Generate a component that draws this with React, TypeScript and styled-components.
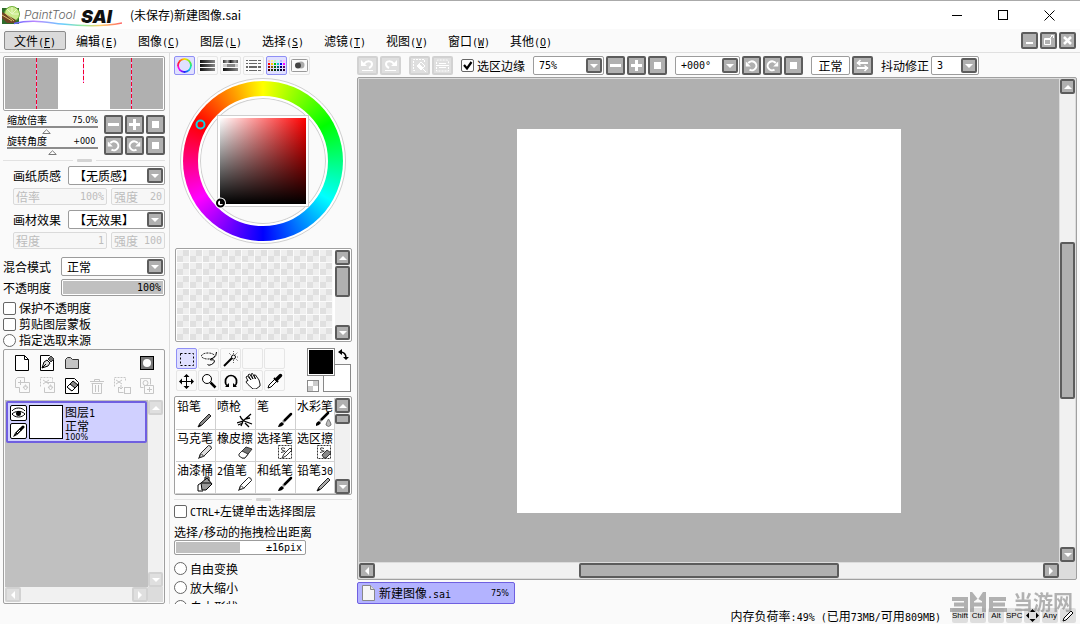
import React from "react";
import styled, { createGlobalStyle, css } from "styled-components";

const CJK = `"Noto Sans CJK SC", sans-serif`;
const MONO = `"DejaVu Sans Mono", "Noto Sans CJK SC", monospace`;

const Global = createGlobalStyle`
  * { box-sizing: border-box; }
  body { margin: 0; background: #fafafa; color: #000; font: 12px/16px ${CJK}; }
  button, input, select { margin: 0; padding: 0; font: inherit; color: inherit; }
  svg { display: block; flex: none; }
`;

const svgUrl = (body: string, w: number, h: number) =>
  `url("data:image/svg+xml,${encodeURIComponent(
    `<svg xmlns='http://www.w3.org/2000/svg' width='${w}' height='${h}' viewBox='0 0 ${w} ${h}'>${body}</svg>`
  )}")`;

const ARROW = svgUrl(
  `<rect x='1' y='1' width='14' height='13' rx='1' fill='#b0b0b0' stroke='#5c5c5c' stroke-width='2'/><path d='M4 6h8l-4 4z' fill='#fff'/>`, 16, 15);
const TICK = svgUrl(`<path d='M2 5l3 3.5L9.500 2' fill='none' stroke='#000' stroke-width='2.200'/>`, 11, 11);
const POINTER = svgUrl(`<path d='M4.500 .8L8.300 4.500H.7z' fill='#fff' stroke='#777'/>`, 9, 5);

/* ---------- text ---------- */

const Half = styled.span`font: 10px/1 ${MONO};`;

function Txt({ children }: { children: string }) {
  return (
    <>
      {children.split(/([\x20-\x7e±°]+)/).filter(Boolean).map((s, i) =>
        /^[\x20-\x7e±°]/.test(s) ? <Half key={i}>{s}</Half> : s)}
    </>
  );
}

/* ---------- shared controls ---------- */

const grayFace = css`
  border: 2px solid #5c5c5c;
  border-radius: 2px;
  background: #b0b0b0;
  color: #fff;
  &:disabled { border-color: #d2d2d2; background: #dfdfdf; }
`;

const GrayButton = styled.button<{ $w?: number; $h?: number }>`
  ${grayFace}
  display: flex;
  flex: none;
  align-items: center;
  justify-content: center;
  width: ${p => p.$w ?? 19}px;
  height: ${p => p.$h ?? 19}px;
`;

const Select = styled.select<{ $w: number; $mono?: boolean }>`
  appearance: none;
  flex: none;
  width: ${p => p.$w}px;
  height: 19px;
  padding: 0 18px 0 5px;
  border: 1px solid #9c9c9c;
  border-radius: 2px;
  background: #fff ${ARROW} right 1px center no-repeat;
  font: ${p => (p.$mono ? `10px/17px ${MONO}` : `12px/17px ${CJK}`)};
`;

const Check = styled.input`
  appearance: none;
  flex: none;
  width: 13px;
  height: 13px;
  border: 1px solid #666;
  border-radius: ${p => (p.type === "radio" ? 7 : 2)}px;
  background: #fff;
  &:checked { background: #fff ${TICK} center no-repeat; }
`;

const CheckLabel = styled.label<{ $h?: number }>`
  display: flex;
  flex: none;
  align-items: center;
  gap: 3px;
  height: ${p => p.$h ?? 16}px;
  white-space: nowrap;
`;

const Gauge = styled.input<{ $w: number; $h: number; $fill: number }>`
  flex: none;
  width: ${p => p.$w}px;
  height: ${p => p.$h}px;
  padding: 1px 3px;
  border: 1px solid #9c9c9c;
  border-radius: 2px;
  background: linear-gradient(90deg, #c0c0c0 ${p => p.$fill}%, #fff 0);
  box-shadow: inset 0 0 0 1px #fff;
  font: 10px/13px ${MONO};
  text-align: right;
`;

const Divider = styled.div<{ $h: number }>`
  display: flex;
  flex: none;
  align-items: center;
  gap: 4px;
  height: ${p => p.$h}px;
  &::before, &::after { content: ""; flex: 1; height: 1px; background: #e2e2e2; }
`;
const Grip = styled.span`width: 15px; height: 3px; border-radius: 1px; background: #d4d4d4;`;

const Bar = styled.div<{ $dir: "row" | "column" }>`
  display: flex;
  flex-direction: ${p => p.$dir};
  justify-content: space-between;
  min-width: 0;
  min-height: 0;
  background: #f1f1f1;
`;
const Track = styled.div<{ $dir: "row" | "column"; $center?: boolean }>`
  display: flex;
  flex: 1;
  flex-direction: ${p => p.$dir};
  justify-content: ${p => (p.$center ? "center" : "flex-start")};
  padding: ${p => (p.$dir === "row" ? "0 1px" : "1px 0")};
`;
const Thumb = styled.div<{ $size: string }>`
  ${grayFace}
  flex: 0 0 ${p => p.$size};
`;

function ScrollBar({ dir, thumb, center, disabled }: {
  dir: "row" | "column"; thumb?: string; center?: boolean; disabled?: boolean;
}) {
  const v = dir === "column";
  return (
    <Bar $dir={dir}>
      <GrayButton $w={v ? 15 : 16} $h={15} disabled={disabled} aria-label={v ? "上" : "左"}>
        <svg width="8" height="8"><path d={v ? "M0 6h8L4 2z" : "M6 0v8L2 4z"} fill="#fff" /></svg>
      </GrayButton>
      <Track $dir={dir} $center={center}>{thumb && <Thumb $size={thumb} />}</Track>
      <GrayButton $w={v ? 15 : 16} $h={15} disabled={disabled} aria-label={v ? "下" : "右"}>
        <svg width="8" height="8"><path d={v ? "M0 2h8L4 6z" : "M2 0v8l4-4z"} fill="#fff" /></svg>
      </GrayButton>
    </Bar>
  );
}

/* ---------- icons ---------- */

const Minus = () => <svg width="13" height="13"><rect x="1" y="5" width="11" height="3" fill="#fff" /></svg>;
const Plus = () => <svg width="13" height="13"><path d="M1 5h4V1h3v4h4v3H8v4H5V8H1z" fill="#fff" /></svg>;
const Stop = () => <svg width="13" height="13"><rect x="3" y="3" width="7" height="7" fill="#fff" /></svg>;
const Rotate = ({ cw }: { cw?: boolean }) => (
  <svg width="13" height="13" viewBox="0 0 13 13">
    <g transform={cw ? "translate(13 0) scale(-1 1)" : undefined}>
      <path d="M3.200 4.200A4.500 4.500 0 1 1 4.500 10.700" fill="none" stroke="#fff" strokeWidth="2" />
      <path d="M.8 2.500v5h5z" fill="#fff" />
    </g>
  </svg>
);
const Undo = ({ flip }: { flip?: boolean }) => (
  <svg width="15" height="15" viewBox="0 0 15 15">
    <g transform={flip ? "translate(15 0) scale(-1 1)" : undefined}>
      <path d="M4 6c3-4 8-3 8 0 0 2-1 3-3 4" fill="none" stroke="#fff" strokeWidth="2" />
      <path d="M1 2v6h6zM2 12h11v1H2z" fill="#fff" />
    </g>
  </svg>
);
const ClearSel = () => (
  <svg width="15" height="15" fill="none" stroke="#fff">
    <path d="M12.500 4V1.500h-11v11H4" strokeDasharray="2 1" />
    <path d="M5 8l4-4 4 4-4 4z" fill="#dfdfdf" /><path d="M5 8l2-2 4 4-2 2zM10 10l4 4" fill="#fff" />
  </svg>
);
const InvertSel = () => (
  <svg width="15" height="15" fill="none" stroke="#fff">
    <path d="M1.500 6v-2q0-2 2-2h8q2 0 2 2v2M1.500 9v4h12V9" strokeDasharray="2 1" />
    <path d="M1 7.500h13M4 5.500h7M4 9.500h7" />
  </svg>
);
const Swap = () => (
  <svg width="15" height="13" fill="none" stroke="#fff" strokeWidth="2">
    <path d="M2 4h11M2 9h11" /><path d="M5.500 1l-3 3 3 2.500M9.500 6.500l3 2.500-3 3" strokeWidth="1.500" />
  </svg>
);

/* ---------- title bar ---------- */

const TitleBar = styled.header`
  display: flex;
  flex: none;
  align-items: center;
  height: 29px;
  padding: 0 8px 0 2px;
  border-top: 1px solid #aaa;
  background: #fff;
`;
const Title = styled.h1`flex: 1; margin: 0 0 0 8px; font: 12px/16px ${CJK};`;
const WinButton = styled.button`
  display: grid;
  place-items: center;
  width: 46px;
  height: 28px;
  border: 0;
  background: none;
`;

const Logo = () => (
  <svg width="120" height="24" viewBox="0 0 120 24">
    <defs>
      <linearGradient id="rb"><stop offset="0" stopColor="#66f" /><stop offset=".2" stopColor="#b8f" />
        <stop offset=".45" stopColor="#6cf" /><stop offset=".65" stopColor="#9e9" /><stop offset=".8" stopColor="#fc6" />
        <stop offset="1" stopColor="#f66" /></linearGradient>
    </defs>
    <rect x="0" y="5" width="17" height="16" fill="#2f6b2c" />
    <circle cx="10" cy="11" r="7.500" fill="#c9ea8c" stroke="#6fb03a" />
    <path d="M10 11L5 6M10 11l5-5M10 11V4M10 11h7" stroke="#eaf8c8" />
    <path d="M0 9l14 8-1 3H5l-5-5z" fill="#6e4424" /><path d="M0 12l10 6M3 10l9 8" stroke="#dcc06a" />
    <path d="M12 20.500C30 16 42 19 60 21s40 3 60-1" fill="none" stroke="url(#rb)" strokeWidth="1.500" />
    <text x="22" y="16" fontFamily="Inter, sans-serif" fontWeight="300" fontStyle="italic" fontSize="12" fill="#666">PaintTool</text>
    <text x="79" y="20" fontFamily="Inter, sans-serif" fontWeight="900" fontStyle="italic" fontSize="18" fill="#111">SAI</text>
  </svg>
);

/* ---------- menu ---------- */

const MenuBar = styled.nav`
  display: flex;
  flex: none;
  align-items: flex-start;
  height: 24px;
  padding: 2px 4px 0;
  border-bottom: 1px solid #e0e0e0;
`;
const MenuItem = styled.button<{ $on?: boolean }>`
  width: 62px;
  height: 19px;
  border: 1px solid ${p => (p.$on ? "#8c8c8c" : "transparent")};
  border-radius: 2px;
  background: ${p => (p.$on ? "#dadada" : "none")};
  line-height: 16px;
  white-space: nowrap;
`;
const MdiButtons = styled.div`display: flex; gap: 2px; margin: 1px 0 0 auto;`;

const MENU: [string, string][] = [
  ["文件", "F"], ["编辑", "E"], ["图像", "C"], ["图层", "L"], ["选择", "S"],
  ["滤镜", "T"], ["视图", "V"], ["窗口", "W"], ["其他", "O"],
];

/* ---------- page frame ---------- */

const Page = styled.div`display: flex; flex-direction: column; height: 100vh; overflow: hidden;`;
const Body = styled.main`
  display: grid;
  grid-template-columns: 170px 187px minmax(0, 1fr);
  grid-template-rows: minmax(0, 1fr);
  flex: 1;
  min-height: 0;
`;
const Column = styled.section<{ $pad: string; $line?: boolean }>`
  display: flex;
  flex-direction: column;
  min-width: 0;
  overflow: hidden;
  padding: ${p => p.$pad};
  border-right: ${p => (p.$line ? "1px solid #dcdcdc" : "0")};
`;
const Row = styled.div<{ $top?: number; $left?: number; $gap?: number }>`
  display: flex;
  flex: none;
  align-items: center;
  justify-content: space-between;
  gap: ${p => p.$gap ?? 0}px;
  margin-top: ${p => p.$top ?? 0}px;
  padding-left: ${p => p.$left ?? 0}px;
  white-space: nowrap;
`;
const Frame = styled.div`
  border: 1px solid #a0a0a0;
  border-radius: 2px;
  background: #fff;
  padding: 1px;
`;

/* ---------- left column ---------- */

const Navigator = styled(Frame)`height: 55px; flex: none;`;
const ZoomGrid = styled.div`display: grid; gap: 2px; flex: none; margin-top: 4px; padding-left: 4px;`;
const ZoomRow = styled.div`display: flex; gap: 2px;`;
const ZoomValue = styled.label`
  display: grid;
  grid-template-columns: 1fr auto;
  grid-template-rows: 11px 8px;
  width: 91px;
  margin-right: 4px;
  font-size: 10px;
  line-height: 10px;
`;
const Tiny = styled.span`font: 9px/10px "DejaVu Sans Condensed", "DejaVu Sans", sans-serif;`;
const Slider = styled.input`
  appearance: none;
  grid-column: 1 / -1;
  width: 100%;
  height: 8px;
  background: none;
  &::-webkit-slider-runnable-track { height: 8px; border-top: 2px solid #8c8c8c; }
  &::-webkit-slider-thumb { appearance: none; width: 9px; height: 5px; margin-top: 1px; background: ${POINTER}; }
`;
const MiniField = styled.label<{ $w: number }>`
  display: flex;
  align-items: center;
  width: ${p => p.$w}px;
  height: 17px;
  padding: 0 2px;
  border: 1px solid #dadada;
  border-radius: 2px;
  background: #f7f7f7;
  color: #bcbcbc;
  input { flex: 1; min-width: 0; border: 0; background: none; text-align: right; font: 10px/14px ${MONO}; color: #bcbcbc; }
`;
const LayerPanel = styled(Frame)`
  display: flex;
  flex: 1;
  flex-direction: column;
  min-height: 0;
  margin-top: 1px;
  background: #fafafa;
`;
const IconRow = styled.div`display: flex; flex: none; padding: 0 4px;`;
const LayerTool = styled.button<{ $end?: boolean }>`
  display: grid;
  place-items: center;
  width: 25px;
  height: 23px;
  margin-left: ${p => (p.$end ? "auto" : "0")};
  border: 0;
  background: none;
  color: #000;
  &:disabled { color: #c6c6c6; }
`;
const LayerArea = styled.div`
  display: grid;
  flex: 1;
  grid-template-columns: minmax(0, 1fr) 15px;
  grid-template-rows: minmax(0, 1fr) 15px;
  margin-top: 3px;
  background: #dcdcdc;
`;
const LayerList = styled.div`padding: 1px; background: #c0c0c0;`;
const Layer = styled.div`
  display: flex;
  gap: 2px;
  height: 42px;
  padding: 2px;
  border: 2px solid #6f5fe0;
  border-radius: 2px;
  background: #d0d0ff;
`;
const LayerToggles = styled.div`display: grid; gap: 2px;`;
const Toggle = styled.button`
  display: grid;
  place-items: center;
  width: 17px;
  height: 16px;
  border: 1px solid #000;
  border-radius: 2px;
  background: #fff;
`;
const Thumbnail = styled.div`width: 34px; height: 34px; border: 1px solid #000; background: #fff;`;
const LayerText = styled.div`display: grid; align-content: start; line-height: 13px;`;

const page = <path d="M1.500 .5h9l4 4v11h-13z" fill="#fff" stroke="currentColor" />;
const boxDown = (
  <path d="M7.500 5.500h8v10h-10v-5M9 10h2V8h1v2h2l-2.500 3z" fill="none" stroke="currentColor" />
);

function EyeIcon() {
  return (
    <svg width="15" height="12" viewBox="0 0 15 12">
      <path d="M1 4c3-4 10-4 13 0M1 7c3-3 9-4 13 0-3 4-10 4-13 0z" fill="none" stroke="#000" />
      <circle cx="7.500" cy="6.500" r="2.500" />
    </svg>
  );
}

function LeftColumn() {
  return (
    <Column $pad="3px 4px 0 3px" $line>
      <Navigator>
        <svg width="100%" height="51" viewBox="0 0 158 51" shapeRendering="crispEdges">
          <path d="M0 0h53v51H0zM105 0h53v51h-53z" fill="#b0b0b0" />
          <path d="M31.500 0v51M78.500 0v25M126.500 0v51" stroke="#ff9cf0" />
          <path d="M31.500 0v51M78.500 0v25M126.500 0v51" stroke="#f00030" strokeDasharray="4 2" />
        </svg>
      </Navigator>
      <ZoomGrid>
        <ZoomRow>
          <ZoomValue>缩放倍率<Tiny>75.0%</Tiny><Slider type="range" defaultValue={43} /></ZoomValue>
          <GrayButton aria-label="缩小"><Minus /></GrayButton>
          <GrayButton aria-label="放大"><Plus /></GrayButton>
          <GrayButton aria-label="重置"><Stop /></GrayButton>
        </ZoomRow>
        <ZoomRow>
          <ZoomValue>旋转角度<Tiny>+000&nbsp;</Tiny><Slider type="range" defaultValue={50} /></ZoomValue>
          <GrayButton aria-label="左转"><Rotate /></GrayButton>
          <GrayButton aria-label="右转"><Rotate cw /></GrayButton>
          <GrayButton aria-label="重置"><Stop /></GrayButton>
        </ZoomRow>
      </ZoomGrid>
      <Divider $h={11}><Grip /></Divider>

      <Row $left={10}>
        <label htmlFor="paper">画纸质感</label>
        <Select id="paper" $w={97}><option>【无质感】</option></Select>
      </Row>
      <Row $top={3} $left={10}>
        <MiniField $w={94}>倍率<input disabled value="100%" /></MiniField>
        <MiniField $w={54}>强度<input disabled value="20" /></MiniField>
      </Row>
      <Row $top={5} $left={10}>
        <label htmlFor="effect">画材效果</label>
        <Select id="effect" $w={97}><option>【无效果】</option></Select>
      </Row>
      <Row $top={3} $left={10}>
        <MiniField $w={94}>程度<input disabled value="1" /></MiniField>
        <MiniField $w={54}>强度<input disabled value="100" /></MiniField>
      </Row>
      <Row $top={8}>
        <label htmlFor="mode">混合模式</label>
        <Select id="mode" $w={104}><option>正常</option></Select>
      </Row>
      <Row $top={3}>
        <label htmlFor="opacity">不透明度</label>
        <Gauge id="opacity" $w={104} $h={17} $fill={100} readOnly value="100%" />
      </Row>
      <Row $top={4} />
      <CheckLabel><Check type="checkbox" />保护不透明度</CheckLabel>
      <CheckLabel><Check type="checkbox" />剪贴图层蒙板</CheckLabel>
      <CheckLabel><Check type="radio" />指定选取来源</CheckLabel>

      <LayerPanel>
        <IconRow>
          <LayerTool aria-label="新建图层"><svg width="16" height="16">{page}<path d="M10.500 .5v4h4" fill="none" stroke="#000" /></svg></LayerTool>
          <LayerTool aria-label="新建钢笔图层">
            <svg width="16" height="16">{page}<path d="M3 13l2-6 3-2 3 3-2 3zM3 13l4-4" fill="#ddd" stroke="#000" /><path d="M9 4l3-3 3 3-3 3z" fill="#777" stroke="#333" /></svg>
          </LayerTool>
          <LayerTool aria-label="新建图层组"><svg width="16" height="16"><path d="M1.500 13.500v-9l2-2h3l2 2h6v9z" fill="#c4c4c4" stroke="#333" /></svg></LayerTool>
          <LayerTool aria-label="图层蒙板" $end>
            <svg width="16" height="16"><rect x="1.500" y="1.500" width="13" height="13" fill="#777" stroke="#000" /><circle cx="8" cy="8" r="4" fill="#fff" /></svg>
          </LayerTool>
        </IconRow>
        <IconRow>
          <LayerTool disabled aria-label="向下转写"><svg width="16" height="17" fill="none" stroke="currentColor"><path d="M5.500 10.500h-4v-8l2-2h7v5M4 5.500h5M6.500 3v5" />{boxDown}</svg></LayerTool>
          <LayerTool disabled aria-label="向下合并"><svg width="16" height="17" fill="none" stroke="currentColor"><path d="M1.500 9.500v-9h12v4" strokeDasharray="2 1" /><path d="M4 3l6 4M4 7l6-4" />{boxDown}</svg></LayerTool>
          <LayerTool aria-label="清除图层">
            <svg width="16" height="16">{page}<path d="M3 9l6-6 5 4-6 6z" fill="#888" stroke="#000" /><path d="M3 9l3-3 5 4-3 3z" fill="#fff" stroke="#000" /></svg>
          </LayerTool>
          <LayerTool disabled aria-label="删除图层">
            <svg width="16" height="16" fill="none" stroke="currentColor"><path d="M1 3.500h14M5.500 3V1.500h5V3M2.500 5.500h11M3.500 6v9.500h9V6M6.500 7v7M9.500 7v7" /></svg>
          </LayerTool>
          <LayerTool disabled aria-label="应用蒙板"><svg width="18" height="17" fill="none" stroke="currentColor"><path d="M1.500 9.500v-9h11v4" strokeDasharray="2 1" /><path d="M3 3l6 4M3 7l6-4M5.500 10v5.500h5M8 8v4M6 10l2 2 2-2" /><rect x="11.500" y="10.500" width="6" height="6" /></svg></LayerTool>
          <LayerTool disabled aria-label="添加蒙板"><svg width="16" height="17" fill="none" stroke="currentColor"><path d="M4.500 10.500h-3v-9h10v6" /><circle cx="6.500" cy="6" r="2.500" /><path d="M5.500 8.500h9v8h-9zM8 12.500h5M10.500 10v5" /></svg></LayerTool>
        </IconRow>
        <LayerArea>
          <LayerList>
            <Layer>
              <LayerToggles>
                <Toggle aria-label="显示"><EyeIcon /></Toggle>
                <Toggle aria-label="编辑">
                  <svg width="13" height="13"><path d="M1 12l2-4 2 2z" /><path d="M4 9l5-5" stroke="#000" strokeWidth="3" /><path d="M5 8l3-3" stroke="#fff" /><path d="M9 4l2-2" stroke="#000" strokeWidth="3" strokeLinecap="round" /></svg>
                </Toggle>
              </LayerToggles>
              <Thumbnail />
              <LayerText><span><Txt>图层1</Txt></span><span>正常</span><Tiny>100%</Tiny></LayerText>
            </Layer>
          </LayerList>
          <ScrollBar dir="column" disabled />
          <ScrollBar dir="row" disabled />
        </LayerArea>
      </LayerPanel>
    </Column>
  );
}

/* ---------- middle column ---------- */

const TabRow = styled.div`display: flex; flex: none; gap: 2px;`;
const PickTab = styled.button<{ $on?: boolean; $w?: number; $h?: number }>`
  display: grid;
  place-items: center;
  width: ${p => p.$w ?? 21}px;
  height: ${p => p.$h ?? 19}px;
  border: 1px solid ${p => (p.$on ? "#8f8ff5" : "#e6e6e6")};
  border-radius: 2px;
  background: ${p => (p.$on ? "#e0e0ff" : "#fafafa")};
`;
const HueDot = styled.span`
  width: 15px;
  height: 15px;
  border-radius: 50%;
  background: conic-gradient(#fd0, #5e3, #0dd, #22f, #f0f, #f22, #fd0);
  mask: radial-gradient(circle, transparent 5px, #000 6px);
`;
const Wheel = styled.div`
  display: grid;
  flex: none;
  place-items: center;
  align-self: center;
  width: 166px;
  height: 166px;
  margin-top: 3px;
  border: 1px solid #cfcfcf;
  border-radius: 50%;
  background: #fff;
  > * { grid-area: 1 / 1; }
`;
const HueRing = styled.div`
  width: 160px;
  height: 160px;
  border-radius: 50%;
  background: conic-gradient(#ff0, #0f0, #0ff, #00f, #f0f, #f00, #ff0);
`;
const WheelHole = styled.div`
  width: 130px;
  height: 130px;
  border: 2px solid #fff;
  border-radius: 50%;
  background: #fafafa;
  box-shadow: inset 0 0 0 1px #cfcfcf;
`;
const ShadeSquare = styled.div`
  width: 92px;
  height: 92px;
  padding: 2px;
  border: 1px solid #cfcfcf;
  background:
    linear-gradient(transparent, #000) content-box,
    linear-gradient(90deg, #fff, #f00) content-box,
    #fff;
`;
const SwatchPanel = styled(Frame)`
  display: grid;
  flex: none;
  grid-template-columns: minmax(0, 1fr) 15px;
  gap: 2px;
  height: 94px;
  margin: 4px 0 0 1px;
`;
const Checker = styled.div`
  background:
    linear-gradient(90deg, transparent 12px, #fbfbfb 12px) 0 0 / 13px 13px,
    linear-gradient(transparent 12px, #fbfbfb 12px) 0 0 / 13px 13px,
    conic-gradient(at 6px 6px, #e0e0e0 25%, #efefef 0 50%, #e0e0e0 0 75%, #efefef 0) 0 0 / 13px 13px;
`;
const ToolArea = styled.div`display: flex; flex: none; justify-content: space-between; height: 44px; margin: 6px 1px 0 2px;`;
const ToolGrid = styled.div`display: grid; grid-template-columns: repeat(5, 21px); gap: 1px; align-content: start;`;
const ColorPair = styled.div`display: grid; grid-template-columns: 16px 12px 16px; grid-template-rows: 16px 12px 16px;`;
const ColorChip = styled.button<{ $front?: boolean }>`
  grid-area: ${p => (p.$front ? "1 / 1 / 3 / 3" : "2 / 2 / 4 / 4")};
  z-index: ${p => (p.$front ? 1 : 0)};
  border: 1px solid #888;
  background: ${p => (p.$front ? "#000" : "#fff")};
  box-shadow: inset 0 0 0 1px #fff;
`;
const SwapArrow = styled.svg`grid-area: 1 / 3; margin: 0 0 0 2px;`;
const ClearColor = styled.button`
  grid-area: 3 / 1;
  align-self: end;
  width: 12px;
  height: 12px;
  border: 1px solid #888;
  background: conic-gradient(#ccc 25%, #fff 0 50%, #ccc 0 75%, #fff 0) content-box;
`;
const BrushPanel = styled(Frame)`
  display: grid;
  flex: none;
  grid-template-columns: minmax(0, 1fr) 15px;
  height: 99px;
  margin-top: 4px;
`;
const BrushGrid = styled.div`display: grid; grid-template-columns: repeat(3, 40px) minmax(0, 1fr); grid-template-rows: repeat(3, 32px);`;
const Brush = styled.button`
  display: grid;
  align-content: start;
  justify-items: start;
  padding: 0 0 0 1px;
  border: 0;
  border-right: 1px solid #d0d0d0;
  border-bottom: 1px solid #d0d0d0;
  background: #fff;
  line-height: 15px;
  white-space: nowrap;
  svg { justify-self: end; margin: -1px 1px 0; }
`;

const pen = (body: string) => (
  <>
    <path d="M1 15l2-5 2 3z" />
    <path d="M3.500 9.500l8-8q3 0 3 3l-8 8-4 1z" fill={body} stroke="#222" />
    <path d="M4 9.500l3 3" stroke="#222" />
  </>
);
const sable = (
  <>
    <path d="M1 15q1-4 4-5l2 2q-2 3-6 3z" /><path d="M6 10l2-2" stroke="#777" strokeWidth="2.500" />
    <path d="M8 8l6-6" stroke="#000" strokeWidth="2.500" strokeLinecap="round" />
  </>
);
const pencil = (body: string) => (
  <><path d="M1 15l2-4 9-9 2 2-9 9z" fill={body} stroke="#222" /><path d="M1 15l2-3 1 2z" /></>
);
const rubber = (
  <>
    <path d="M2 10l7-7 6 2-7 9H5z" fill="#777" stroke="#333" /><path d="M2 10l3-3 6 3-3 4H5l-3-2z" fill="#fff" stroke="#333" />
  </>
);
const selBox = <path d="M1.500 1.500h13v13h-13z" fill="none" stroke="#333" strokeDasharray="2 1" />;
const selS = <path d="M8 4.500Q4 3 4.500 5T7.500 7 4 8.500" fill="none" stroke="#333" />;

const BRUSHES: [string, React.ReactNode][] = [
  ["铅笔", pencil("#888")],
  ["喷枪", <path d="M0 11l6-2 8-7M3 4q1 3 4 5l8 3M6 9l-2 5M8 7l5-1M8 11l4 4M1 13l5-2" stroke="#000" strokeWidth="1.300" fill="none" />],
  ["笔", sable],
  ["水彩笔", <><g transform="translate(-2 -1)">{sable}</g><path d="M12.500 7q3 5 2.500 6-2.500 3-5 0 0-2 2.500-6z" fill="#bbb" stroke="#777" /></>],
  ["马克笔", pen("#ddd")],
  ["橡皮擦", rubber],
  ["选择笔", <>{selBox}{selS}<path d="M5 14l2-4 6-6 2 2-6 6z" fill="#fff" stroke="#333" /></>],
  ["选区擦", <>{selBox}{selS}<path d="M6 11l5-5 4 3-5 5H8z" fill="#888" stroke="#333" /></>],
  ["油漆桶", <><path d="M4 7l6-5 5 6-6 6H5z" fill="#999" stroke="#000" /><path d="M4 7L1 9v6h5M5 7h9M8 4V1h4v4" fill="none" stroke="#000" /></>],
  ["2值笔", pen("#fff")],
  ["和纸笔", sable],
  ["铅笔30", pencil("#aaa")],
];

const TOOLS: [string, React.ReactNode][] = [
  ["选区", <rect x="1.500" y="2.500" width="13" height="12" fill="none" stroke="#000" strokeDasharray="2 2" />],
  ["套索", <><ellipse cx="7" cy="5" rx="6.500" ry="3" fill="none" stroke="#000" strokeDasharray="2 1" /><path d="M15.500 1q0 4-3 6-4 1-3 2 4-1 4 1t-3 3.500-4 0" fill="none" stroke="#000" /></>],
  ["魔棒", <><path d="M1 15l8-8" stroke="#000" strokeWidth="2" /><circle cx="10.500" cy="6" r="2" fill="#fff" stroke="#000" /><path d="M10.500 0v3M14 6h2M12 4l3-3M6 2l2 2M13 8l2 2M10.500 9v3" stroke="#666" strokeDasharray="1 1" /></>],
  ["", null],
  ["", null],
  ["移动", <><path d="M7.500 2v12M2 8.500h12" stroke="#000" /><path d="M7.500 1l3 3h-6zM7.500 16l3-3h-6zM0 8.500l3-3v6zM15 8.500l-3-3v6z" /></>],
  ["缩放", <><circle cx="6" cy="6" r="4.500" fill="#fff" stroke="#000" /><path d="M9.500 9.500l5 5" stroke="#000" strokeWidth="2.500" /></>],
  ["旋转", <><path d="M4.500 13Q2 11 2.500 8a5.500 5.500 0 0 1 11 0q.5 3-2 5" fill="none" stroke="#000" strokeWidth="1.700" /><path d="M6 10v4H2zM10 10v4h4z" /></>],
  ["抓手", <path d="M3 8L1 4l1.500-1L6 7 3 2l1.500-1L8 6 6 1l1.500-.5L10.500 6 9 2l1.500 0L14 7l1 4 0 2-4 3H8L3 11.500 1 9l1-1.500z" fill="#fff" stroke="#000" strokeWidth=".9" />],
  ["吸管", <><path d="M1 15l1-3 6-6 2 2-6 6z" fill="#fff" stroke="#000" /><path d="M7 5l4 4" stroke="#000" strokeWidth="2" /><path d="M10 6l3.500-3.500" stroke="#000" strokeWidth="3.500" strokeLinecap="round" /></>],
];

const bars = (ys: number[], dotted?: boolean) => (
  <svg width="17" height="15" shapeRendering="crispEdges">
    <defs><linearGradient id="gb"><stop stopColor="#111" /><stop offset="1" stopColor="#888" /></linearGradient></defs>
    {ys.map((y, i) => dotted
      ? <path key={y} d={`M1 ${y}h2M4 ${y}h8M13 ${y}h3`} stroke="#666" strokeWidth={i === 2 ? 2 : 1} />
      : <rect key={y} x="1" y={y} width="15" height="3" fill="url(#gb)" />)}
  </svg>
);

const PALETTE = ["#fbb", "#fe9", "#bfb", "#bff", "#bbf", "#fbf", "#f00", "#fc0", "#0c0", "#0cc", "#00f", "#f0f", "#900", "#860", "#060", "#066", "#006", "#606", "#300", "#330", "#030", "#033", "#003", "#303"];

function MiddleColumn() {
  return (
    <Column $pad="3px 5px 0 4px">
      <TabRow>
        <PickTab $on aria-label="色轮"><HueDot /></PickTab>
        <PickTab aria-label="RGB滑块">{bars([2, 6, 10])}</PickTab>
        <PickTab aria-label="HSV滑块">
          <svg width="17" height="15" shapeRendering="crispEdges">
            <defs><linearGradient id="hsv"><stop stopColor="#333" /><stop offset=".3" stopColor="#aaa" /><stop offset=".5" stopColor="#222" /><stop offset=".8" stopColor="#999" /><stop offset="1" stopColor="#555" /></linearGradient></defs>
            <rect x="1" y="2" width="15" height="3" fill="url(#hsv)" />
            <rect x="1" y="6" width="15" height="3" fill="#ccc" /><rect x="5" y="6" width="8" height="3" fill="#888" />
            <rect x="1" y="10" width="15" height="3" fill="url(#gb)" />
          </svg>
        </PickTab>
        <PickTab aria-label="中间色">{bars([2.5, 5.5, 8.5, 12.5], true)}</PickTab>
        <PickTab $on aria-label="色板">
          <svg width="17" height="13" shapeRendering="crispEdges">
            {PALETTE.map((c, i) => <rect key={i} x={(i % 6) * 3} y={Math.floor(i / 6) * 3 + 1} width="2" height="2" fill={c} />)}
          </svg>
        </PickTab>
        <PickTab aria-label="调色盘">
          <svg width="17" height="13"><rect x=".5" y=".5" width="16" height="12" rx="1" fill="#fafafa" stroke="#999" />
            <circle cx="10" cy="6" r="3.500" fill="#aaa" /><circle cx="7" cy="6.500" r="3" fill="#444" /></svg>
        </PickTab>
      </TabRow>

      <Wheel>
        <HueRing />
        <WheelHole />
        <ShadeSquare />
        <svg width="164" height="164" fill="none">
          <circle cx="19.500" cy="45.500" r="4" stroke="#12d0e0" strokeWidth="2" />
          <circle cx="39.500" cy="124" r="4.500" stroke="#fff" strokeWidth="2" />
          <circle cx="39.500" cy="124" r="3.500" stroke="#000" strokeWidth="2" />
        </svg>
      </Wheel>

      <SwatchPanel>
        <Checker />
        <ScrollBar dir="column" thumb="31px" />
      </SwatchPanel>

      <ToolArea>
        <ToolGrid>
          {TOOLS.map(([name, art], i) => (
            <PickTab key={i} $on={i === 0} $w={21} $h={21} aria-label={name || "空"}>
              {art && <svg width="16" height="16">{art}</svg>}
            </PickTab>
          ))}
        </ToolGrid>
        <ColorPair>
          <ColorChip $front aria-label="前景色" />
          <ColorChip aria-label="背景色" />
          <SwapArrow width="13" height="14" viewBox="0 0 13 14">
            <path d="M3 4q6 0 6 6" fill="none" stroke="#000" strokeWidth="1.500" /><path d="M1 4l4-3v6zM9 12l-3-3h6z" />
          </SwapArrow>
          <ClearColor aria-label="透明色" />
        </ColorPair>
      </ToolArea>

      <BrushPanel>
        <BrushGrid>
          {BRUSHES.map(([name, art]) => (
            <Brush key={name}><span><Txt>{name}</Txt></span><svg width="17" height="17">{art}</svg></Brush>
          ))}
        </BrushGrid>
        <ScrollBar dir="column" thumb="10px" />
      </BrushPanel>
      <Divider $h={8}><Grip /></Divider>

      <CheckLabel><Check type="checkbox" /><span><Txt>CTRL+左键单击选择图层</Txt></span></CheckLabel>
      <Row $top={5}><label htmlFor="drag"><Txt>选择/移动的拖拽检出距离</Txt></label></Row>
      <Gauge id="drag" $w={132} $h={15} $fill={50} readOnly value="±16pix" />
      <Row $top={4} />
      {["自由变换", "放大缩小", "自由形状"].map(t => (
        <CheckLabel key={t} $h={19}><Check type="radio" name="transform" />{t}</CheckLabel>
      ))}
    </Column>
  );
}

/* ---------- right column ---------- */

const Toolbar = styled.div`display: flex; flex: none; align-items: center; gap: 8px; height: 19px; margin-bottom: 2px; white-space: nowrap;`;
const Group = styled.div<{ $gap?: number }>`display: flex; align-items: center; gap: ${p => p.$gap ?? 2}px;`;
const ModeButton = styled.button`
  width: 39px;
  height: 19px;
  border: 1px solid #9c9c9c;
  border-radius: 2px;
  background: #fff;
`;
const CanvasFrame = styled(Frame)`
  display: grid;
  flex: 1;
  grid-template-columns: minmax(0, 1fr) 15px;
  grid-template-rows: minmax(0, 1fr) 15px;
  gap: 1px;
  min-height: 0;
  background: #dcdcdc;
`;
const Canvas = styled.div`display: grid; place-items: center; overflow: hidden; background: #b0b0b0;`;
const Paper = styled.div`width: 384px; height: 384px; background: #fff;`;
const DocTab = styled.button`
  display: flex;
  flex: none;
  align-items: center;
  gap: 4px;
  width: 158px;
  height: 22px;
  margin-top: 2px;
  padding: 0 5px 0 4px;
  border: 1px solid #6f5fe0;
  border-radius: 2px;
  background: #b3b3ff;
`;
const Pct = styled(Tiny)`margin-left: auto;`;

function RightColumn() {
  return (
    <Column $pad="3px 3px 0 0">
      <Toolbar>
        <Group>
          <GrayButton $w={21} disabled aria-label="撤销"><Undo /></GrayButton>
          <GrayButton $w={21} disabled aria-label="重做"><Undo flip /></GrayButton>
        </Group>
        <Group>
          <GrayButton $w={21} disabled aria-label="取消选区"><ClearSel /></GrayButton>
          <GrayButton $w={21} disabled aria-label="反选"><InvertSel /></GrayButton>
        </Group>
        <CheckLabel><Check type="checkbox" defaultChecked />选区边缘</CheckLabel>
        <Group>
          <Select $w={71} $mono aria-label="缩放"><option>75%</option></Select>
          <GrayButton aria-label="缩小"><Minus /></GrayButton>
          <GrayButton aria-label="放大"><Plus /></GrayButton>
          <GrayButton aria-label="重置缩放"><Stop /></GrayButton>
        </Group>
        <Group>
          <Select $w={65} $mono aria-label="角度"><option>+000°</option></Select>
          <GrayButton aria-label="左转"><Rotate /></GrayButton>
          <GrayButton aria-label="右转"><Rotate cw /></GrayButton>
          <GrayButton aria-label="重置角度"><Stop /></GrayButton>
        </Group>
        <Group>
          <ModeButton>正常</ModeButton>
          <GrayButton $w={21} aria-label="翻转"><Swap /></GrayButton>
        </Group>
        <Group>
          <label htmlFor="stab">抖动修正</label>
          <Select id="stab" $w={48} $mono><option>3</option></Select>
        </Group>
      </Toolbar>
      <CanvasFrame>
        <Canvas><Paper /></Canvas>
        <ScrollBar dir="column" thumb="35%" center />
        <ScrollBar dir="row" thumb="39%" center />
      </CanvasFrame>
      <DocTab>
        <svg width="13" height="16"><path d="M.5 .5h8l4 4v11H.5z" fill="#f6f6f6" stroke="#888" /><path d="M8.500 .5v4h4" fill="#ddd" stroke="#888" /></svg>
        <span><Txt>新建图像.sai</Txt></span>
        <Pct>75%</Pct>
      </DocTab>
    </Column>
  );
}

/* ---------- status bar ---------- */

const Status = styled.footer`
  position: relative;
  display: flex;
  flex: none;
  align-items: center;
  justify-content: flex-end;
  gap: 11px;
  height: 20px;
  padding: 3px 4px 0 0;
  white-space: nowrap;
`;
const Keys = styled.div`display: flex; gap: 2px;`;
const Key = styled.span`
  display: grid;
  place-items: center;
  width: 16px;
  height: 15px;
  border-radius: 2px;
  background: #dedede;
  font: 8px/15px "Liberation Sans Narrow", "Liberation Sans", sans-serif;
`;
const Watermark = styled.div`
  position: absolute;
  right: 7px;
  bottom: 10px;
  display: flex;
  align-items: center;
  gap: 5px;
  color: #999;
  opacity: 0.75;
  font: bold 20px/24px ${CJK};
  pointer-events: none;
`;

export default function App() {
  return (
    <Page>
      <Global />
      <TitleBar>
        <Logo />
        <Title>(未保存)新建图像.sai</Title>
        <WinButton aria-label="最小化"><svg width="11" height="11"><path d="M0 5.500h10" stroke="#000" /></svg></WinButton>
        <WinButton aria-label="最大化"><svg width="11" height="11"><rect x=".5" y=".5" width="9" height="9" fill="none" stroke="#000" /></svg></WinButton>
        <WinButton aria-label="关闭"><svg width="11" height="11"><path d="M.5 .5l10 10M10.500 .5l-10 10" stroke="#000" /></svg></WinButton>
      </TitleBar>
      <MenuBar>
        {MENU.map(([name, key], i) => (
          <MenuItem key={key} $on={i === 0}>{name}<Half>(<u>{key}</u>)</Half></MenuItem>
        ))}
        <MdiButtons>
          <GrayButton $w={17} $h={17} aria-label="最小化文档"><svg width="11" height="11"><rect x="2" y="7" width="7" height="2" fill="#fff" /></svg></GrayButton>
          <GrayButton $w={17} $h={17} aria-label="还原文档">
            <svg width="11" height="11" fill="none" stroke="#fff"><path d="M1.500 3.500h6v6h-6zM1 4.500h7M7 3l3-3M8 .5h2.500V3" /></svg>
          </GrayButton>
          <GrayButton $w={17} $h={17} aria-label="关闭文档"><svg width="11" height="11"><path d="M2 2l7 7M9 2L2 9" stroke="#fff" strokeWidth="2.500" /></svg></GrayButton>
        </MdiButtons>
      </MenuBar>
      <Body>
        <LeftColumn />
        <MiddleColumn />
        <RightColumn />
      </Body>
      <Status>
        <span><Txt>内存负荷率:49% (已用73MB/可用809MB)</Txt></span>
        <Keys>
          <Key>Shift</Key><Key>Ctrl</Key><Key>Alt</Key><Key>SPC</Key>
          <Key><svg width="13" height="13"><path d="M6.500 0l3 3h-6zM6.500 13l3-3h-6zM0 6.500l3-3v6zM13 6.500l-3-3v6z" /></svg></Key>
          <Key>Any</Key>
          <Key><svg width="12" height="12"><path d="M1 11l1-3 7-7 2 2-7 7z" fill="#fff" stroke="#000" /></svg></Key>
        </Keys>
        <Watermark>
          <svg width="58" height="21" viewBox="0 0 58 21" fill="none" stroke="#999" strokeWidth="4">
            <path d="M2 7h14v11H0M4 12.500h12M22 20V3l4 5M34 20V2l-4 6M22 12.500h12M56 7H41v11h16M41 12.500h14" />
          </svg>
          当游网
        </Watermark>
      </Status>
    </Page>
  );
}
